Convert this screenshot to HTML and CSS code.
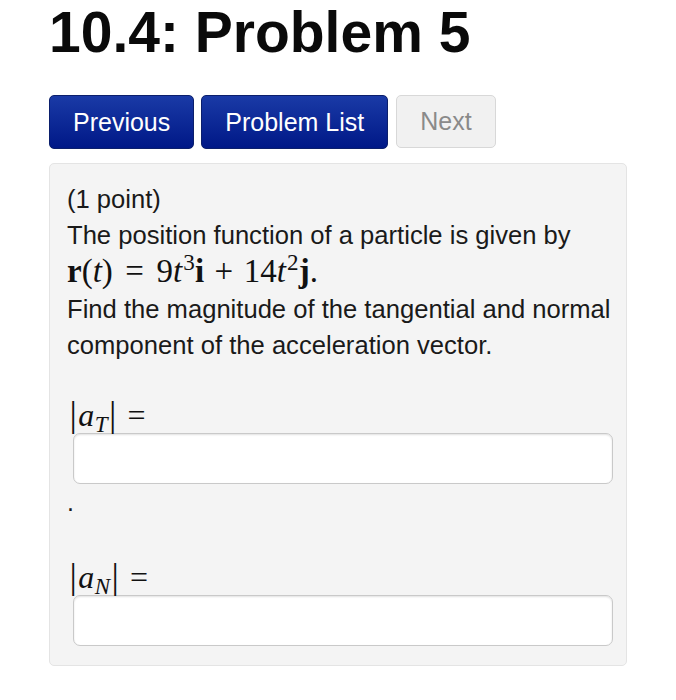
FILE: index.html
```html
<!DOCTYPE html>
<html>
<head>
<meta charset="utf-8">
<link rel="stylesheet" href="styles.css">
</head>
<body>
<div class="page">
  <h1 class="title">10.4: Problem 5</h1>
  <nav class="nav">
    <a class="btn btn-primary">Previous</a>
    <a class="btn btn-primary">Problem List</a>
    <span class="btn btn-disabled">Next</span>
  </nav>
  <div class="panel">
    <p class="text">(1 point)<br>The position function of a particle is given by<br><span class="math eq"><b class="bf">r</b><span class="op">(</span><i class="it">t</i><span class="op">)</span><span class="rel">=</span>9<i class="it">t</i><sup class="sup">3</sup><b class="bf">i</b><span class="bin">+</span>14<i class="it">t</i><sup class="sup">2</sup><b class="bf">j</b>.</span><br>Find the magnitude of the tangential and normal<br>component of the acceleration vector.</p>
    <div class="label math"><span class="bar">|</span><i class="it">a</i><sub class="sub">T</sub><span class="bar">|</span><span class="rel">=</span></div>
    <div class="input"></div>
    <div class="dot">.</div>
    <div class="label label-2 math"><span class="bar">|</span><i class="it">a</i><sub class="sub">N</sub><span class="bar">|</span><span class="rel">=</span></div>
    <div class="input"></div>
  </div>
</div>
</body>
</html>
```
FILE: styles.css
```css
html, body {
  margin: 0;
  padding: 0;
  background: #ffffff;
}
body {
  font-family: "Liberation Sans", Arial, sans-serif;
  color: #1a1a1a;
}
.page {
  padding: 0 49px;
}
.title {
  margin: 0;
  font-size: 57px;
  line-height: 64px;
  font-weight: bold;
  color: #0a0a0a;
}
.nav {
  display: flex;
  gap: 7px;
  margin-top: 31px;
}
.btn {
  display: inline-flex;
  align-items: center;
  justify-content: center;
  box-sizing: border-box;
  height: 54px;
  padding: 0 23px;
  font-size: 25px;
  border-radius: 5px;
  text-decoration: none;
}
.btn-primary {
  color: #ffffff;
  background: linear-gradient(#1a3aa6, #001887);
  border: 1px solid #0b1f6c;
}
.btn-disabled {
  margin-left: 1px;
  color: #8a8a8a;
  background: #f1f1f1;
  border: 1px solid #d8d8d8;
  height: 53px;
}
.panel {
  margin-top: 14px;
  background: #f4f4f4;
  border: 1px solid #e4e4e4;
  border-radius: 5px;
  padding: 17px 13px 19px 17px;
}
.text {
  margin: 0;
  font-size: 25.6px;
  line-height: 36px;
  color: #1a1a1a;
}
.math {
  font-family: "Liberation Serif", "Times New Roman", serif;
  color: #111;
}
.eq {
  font-size: 33px;
}
.bf {
  font-weight: bold;
}
.it {
  font-style: italic;
}
.op {
  font-style: normal;
}
.eq .rel {
  margin: 0 0.38em;
}
.bin {
  margin: 0 0.32em;
}
.sup {
  font-size: 0.7em;
  line-height: 0;
  vertical-align: 0.5em;
  margin-left: 0.05em;
}
.sub {
  font-size: 0.72em;
  line-height: 0;
  vertical-align: -0.25em;
  font-style: italic;
  margin-left: 0.02em;
}
.label {
  margin-top: 34px;
  margin-left: 1px;
  font-size: 32px;
  line-height: 36px;
  height: 36px;
}
.label .bar {
  font-style: normal;
  font-size: 1.15em;
  line-height: 0;
  margin: 0 0.04em;
}
.label .rel {
  margin: 0 0.3em;
}
.label-2 {
  margin-top: 39px;
}
.input {
  box-sizing: border-box;
  margin-left: 6px;
  height: 51px;
  background: #ffffff;
  border: 1px solid #c9c9c9;
  border-radius: 7px;
  box-shadow: inset 0 1px 2px rgba(0, 0, 0, 0.12);
}
.dot {
  margin-top: 0;
  font-size: 25px;
  line-height: 36px;
}
```
